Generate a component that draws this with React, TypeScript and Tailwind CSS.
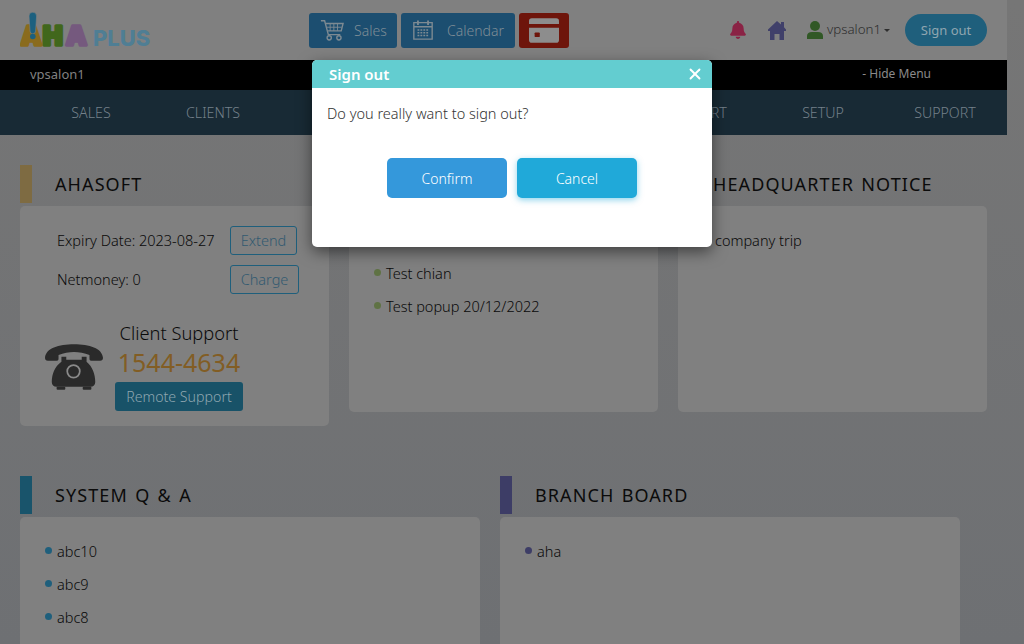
import { X } from 'lucide-react';
import { FaBell } from 'react-icons/fa';

const navItems = ['SALES', 'CLIENTS', 'STAFF', 'GOODS', 'STOCK', 'REPORT', 'SETUP', 'SUPPORT'];

function CartIcon() {
  return (
    <svg width="24" height="24" viewBox="0 0 26 26" fill="none" stroke="#7d8a92" strokeWidth="1.500">
      <path d="M1 3h4l4 15h13" />
      <path d="M6.500 6H25l-2 8H8.700" />
      <path d="M11 6v8M15 6v8M19 6v8M7.500 10h16" strokeWidth="1" />
      <circle cx="10" cy="21.500" r="2.300" />
      <circle cx="20.500" cy="21.500" r="2.300" />
    </svg>
  );
}

function CalendarIcon() {
  return (
    <svg width="22" height="22" viewBox="0 0 24 24" fill="none" stroke="#7d8a92" strokeWidth="1.500">
      <path d="M2 4h20v18H2zM2 8.500h20" />
      <path d="M6.500 1.500v5M17.500 1.500v5" strokeWidth="2" />
      <path d="M6 12h12M6 15h12M6 18h12" strokeDasharray="2 1.200" />
    </svg>
  );
}

function CardIcon() {
  return (
    <svg width="30" height="25" viewBox="0 0 32 26" fill="#8d8d8d">
      <path d="M3 0h26a3 3 0 0 1 3 3v3H0V3a3 3 0 0 1 3-3z" />
      <path d="M0 10h32v13a3 3 0 0 1-3 3H3a3 3 0 0 1-3-3z" />
      <rect x="6" y="15" width="5.500" height="5" rx="1" fill="#6e150b" />
    </svg>
  );
}

function HomeIcon() {
  return (
    <svg width="18" height="19" viewBox="0 0 18 19" fill="#40406a">
      <path d="M9 0l4 3.500V1h3v5.200L18 8.500V10h-2v9h-4.500v-6h-5v6H2v-9H0V8.500z" />
    </svg>
  );
}

function UserIcon() {
  return (
    <svg width="16" height="18" viewBox="0 0 16 18" fill="#315826">
      <ellipse cx="8" cy="5" rx="5" ry="5" />
      <path d="M0 18v-3c0-2.500 2-4 5-4h6c3 0 5 1.500 5 4v3z" />
    </svg>
  );
}

function PhoneIcon() {
  return (
    <svg width="58" height="47" viewBox="0 0 60 48" fill="#2a2a2a">
      <path d="M0 15C1 5 14 1 30 1s29 4 30 14c0 2-1 3-3 3h-9c-2 0-2-1-2-3v-3c-5-2-11-3-16-3s-11 1-16 3v3c0 2 0 3-2 3H3c-2 0-3-1-3-3z" />
      <path d="M17 14h5v3h16v-3h5v5c6 5 9 13 9 21 0 3-2 5-5 5H12c-3 0-5-2-5-5 0-8 3-16 10-21z" />
      <rect x="12" y="45" width="9" height="3" rx="1" />
      <rect x="39" y="45" width="9" height="3" rx="1" />
      <circle cx="29.500" cy="29" r="6.500" fill="none" stroke="#8a8a8a" strokeWidth="1.800" />
    </svg>
  );
}

function Logo() {
  const aha = { fontFamily: 'Inter, sans-serif', fontWeight: 900, fontSize: 26, strokeWidth: 3.500, strokeLinejoin: 'round' as const };
  return (
    <svg width="132" height="36" viewBox="0 0 132 36" className="shrink-0">
      <text x="1" y="33" {...aha} fill="#8a6b1d" stroke="#8a6b1d">A</text>
      <text x="23" y="33" {...aha} fill="#41671c" stroke="#41671c">H</text>
      <text x="46" y="33" {...aha} fill="#75597e" stroke="#75597e">A</text>
      <path d="M9 4a3.800 3.800 0 0 1 7.600 0l-1 15a2.800 2.800 0 0 1-5.600 0z" fill="#1c607f" stroke="#808080" strokeWidth="0.600" />
      <circle cx="12.800" cy="24.500" r="2.800" fill="#1c607f" />
      <text x="73" y="34" fontFamily="Inter, sans-serif" fontWeight="800" fontSize="22" letterSpacing="0" fill="#4f7e94">PLUS</text>
    </svg>
  );
}

function SectionTitle({ title, color }: { title: string; color: string }) {
  return (
    <div className="flex h-[38px] items-center gap-[23px]">
      <div className={`h-full w-3 shrink-0 ${color}`} />
      <h2 className="text-[18px] font-normal tracking-[1.100px] [word-spacing:1.500px] text-[#0b0b0b]">{title}</h2>
    </div>
  );
}

function Bullets({ items, dot }: { items: string[]; dot: string }) {
  return (
    <ul className="flex flex-col gap-[13px] pl-[25px] pt-[24px] text-[14.500px] font-light leading-[20px] text-[#0a0a0a]">
      {items.map((item) => (
        <li key={item} className="flex items-center gap-[5px]">
          <span className={`mb-[2px] size-[7px] rounded-full ${dot}`} />
          {item}
        </li>
      ))}
    </ul>
  );
}

export default function App() {
  return (
    <div
      className="relative h-[644px] w-[1024px] overflow-hidden bg-gradient-to-b from-[#767676] to-[#6e7073] text-[14px] font-light"
      style={{ fontFamily: '"Noto Sans", "Noto Sans CJK KR", sans-serif' }}
    >
      <div className="w-[1007px]">
        <header className="flex h-[60px] items-center bg-[#808080] px-5">
          <Logo />
          <div className="ml-[157px] flex gap-1">
            <div className="flex h-[35px] w-[88px] items-center gap-[10px] rounded-[3px] bg-[#1c4e70] pl-[11px] text-[#7f8d96]">
              <CartIcon />
              Sales
            </div>
            <div className="flex h-[35px] w-[114px] items-center gap-[13px] rounded-[3px] bg-[#1c4e70] pl-[11px] text-[#7f8d96]">
              <CalendarIcon />
              Calendar
            </div>
            <div className="flex h-[35px] w-[50px] items-center justify-center rounded-[3px] bg-[#6e150b]">
              <CardIcon />
            </div>
          </div>
          <div className="ml-auto flex items-center">
            <FaBell className="-ml-px size-[18px] text-[#8a2345]" />
            <div className="ml-[21px]">
              <HomeIcon />
            </div>
            <div className="ml-[21px]">
              <UserIcon />
            </div>
            <span className="ml-[4px] text-[13.300px] text-[#2e2e2e]">vpsalon1</span>
            <span className="ml-[3px] border-x-[3px] border-t-[3px] border-x-transparent border-t-[#2e2e2e]" />
            <div className="ml-[15px] flex h-[32px] w-[82px] items-center justify-center rounded-full bg-[#1f5f7c] pt-px text-[13px] font-normal text-[#8fa6b0]">
              Sign out
            </div>
          </div>
        </header>

        <div className="flex h-[30px] items-center bg-black pl-[30px] pr-[76px] text-[13px] font-normal text-[#808080]">
          <span>vpsalon1</span>
          <span className="-mt-[2px] ml-auto text-[12px] text-[#8a8a8a]">- Hide Menu</span>
        </div>

        <nav className="flex h-[45px] items-center bg-[#182a35] pl-[30px]">
          {navItems.map((item) => (
            <div key={item} className="w-[122px] text-center text-[14.200px] text-[#74808a]">
              {item}
            </div>
          ))}
        </nav>

        <div className="grid grid-cols-[309px_309px_309px] gap-x-5 px-5 pt-[30px]">
          <section>
            <SectionTitle title="AHASOFT" color="bg-[#7e6b42]" />
            <div className="mt-[3px] h-[220px] rounded-[5px] bg-[#808080] pl-[37px] pt-5 text-[14.500px] text-[#0a0a0a]">
              <div className="flex h-[29px] items-center justify-between pr-[32px]">
                <span>Expiry Date: 2023-08-27</span>
                <span className="flex h-[29px] w-[67px] items-center justify-center rounded-[3px] border border-[#1f5f7c] text-[#325a70]">Extend</span>
              </div>
              <div className="mt-[10px] flex h-[29px] items-center justify-between pr-[30px]">
                <span>Netmoney: 0</span>
                <span className="flex h-[29px] w-[69px] items-center justify-center rounded-[3px] border border-[#1f5f7c] text-[#325a70]">Charge</span>
              </div>
              <div className="-ml-[12px] mt-[27px] flex items-end gap-[12px]">
                <div className="mb-[21px]">
                  <PhoneIcon />
                </div>
                <div className="flex w-[128px] flex-col items-center">
                  <span className="text-[18.300px] leading-[24px] text-[#0a0a0a]">Client Support</span>
                  <span className="text-[25px] font-normal leading-[34px] text-[#825d24]">1544-4634</span>
                  <span className="mt-[3px] flex h-[29px] w-full items-center justify-center rounded-[3px] bg-[#185268] text-[14.200px] text-[#8fa6b0]">Remote Support</span>
                </div>
              </div>
            </div>
          </section>

          <section>
            <SectionTitle title="NOTICE" color="bg-[#596d43]" />
            <div className="mt-[3px] h-[206px] rounded-[5px] bg-[#808080]">
              <Bullets items={['Test notice', 'Test chian', 'Test popup 20/12/2022']} dot="bg-[#5f7244]" />
            </div>
          </section>

          <section>
            <SectionTitle title="HEADQUARTER NOTICE" color="bg-[#3d3d66]" />
            <div className="mt-[3px] h-[206px] rounded-[5px] bg-[#808080]">
              <Bullets items={['company trip']} dot="bg-[#3d3d66]" />
            </div>
          </section>
        </div>

        <div className="grid grid-cols-[460px_460px] gap-x-5 px-5 pt-[50px]">
          <section>
            <SectionTitle title="SYSTEM Q & A" color="bg-[#19546b]" />
            <div className="mt-[3px] h-[200px] rounded-t-[5px] bg-[#808080]">
              <Bullets items={['abc10', 'abc9', 'abc8']} dot="bg-[#1f5f7c]" />
            </div>
          </section>
          <section>
            <SectionTitle title="BRANCH BOARD" color="bg-[#3d3d66]" />
            <div className="mt-[3px] h-[200px] rounded-t-[5px] bg-[#808080]">
              <Bullets items={['aha']} dot="bg-[#3d3d66]" />
            </div>
          </section>
        </div>
      </div>

      {/* sign out modal */}
      <div className="absolute left-[312px] top-[60px] h-[187px] w-[400px] overflow-hidden rounded-[5px] bg-white shadow-[0_5px_15px_rgba(0,0,0,0.5)]">
        <div className="flex h-[28px] items-center justify-between bg-[#63cdd0] pl-[17px] pr-[8px] text-white">
          <span className="text-[15px] font-semibold">Sign out</span>
          <X className="size-[18px]" strokeWidth={2.500} />
        </div>
        <p className="pl-[15px] pt-[14px] text-[14.500px] leading-[22px] text-[#333]">Do you really want to sign out?</p>
        <div className="mt-[34px] flex justify-center gap-[10px]">
          <button className="h-[40px] w-[120px] rounded-[5px] bg-[#3498db] text-white">Confirm</button>
          <button className="h-[40px] w-[120px] rounded-[5px] bg-[#20a9d9] text-white shadow-[0_2px_6px_rgba(32,169,217,0.5)]">Cancel</button>
        </div>
      </div>
    </div>
  );
}
